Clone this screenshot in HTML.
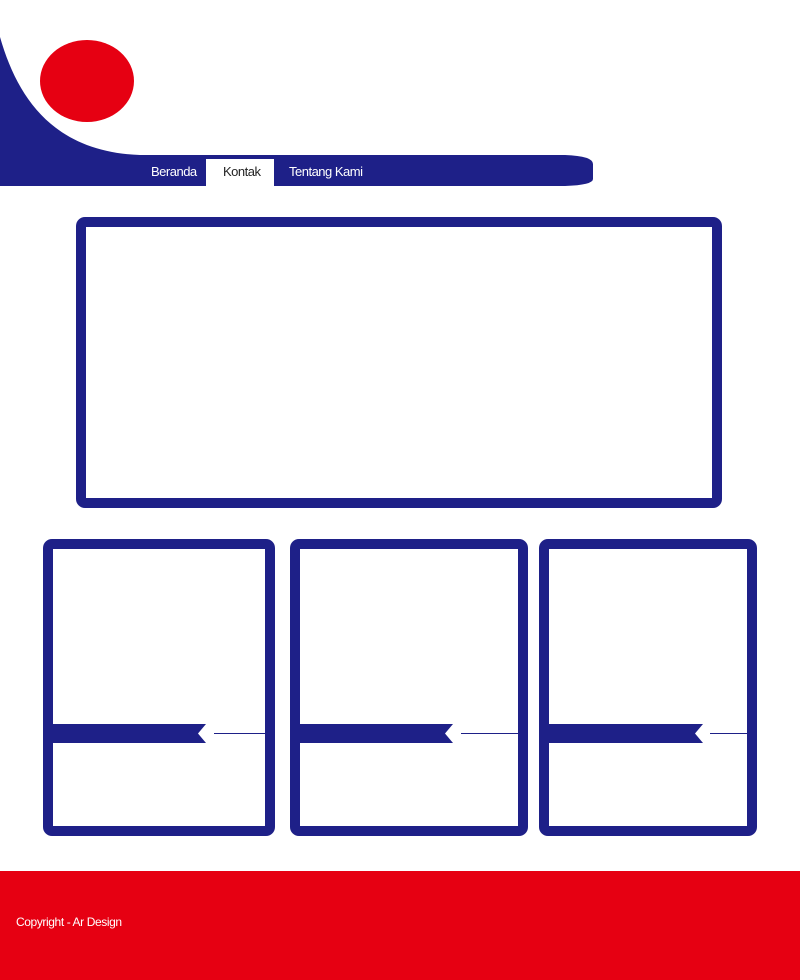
<!DOCTYPE html>
<html><head><style>
body{margin:0;width:800px;height:980px;position:relative;background:#fff;font-family:"Liberation Sans",sans-serif;overflow:hidden}
.a{position:absolute}
.box{position:absolute;border:10px solid #1e2088;border-radius:9px;box-sizing:border-box;background:#fff}
.nav{font-size:13px;color:#fff;top:164px;letter-spacing:-0.5px}
</style></head><body>
<svg class="a" style="left:0;top:0" width="800" height="200">
<path d="M0 37 C18 100 55 152 140 155 L565 155 Q593 156 593 164 L593 179 Q593 185 565 186 L0 186 Z" fill="#1e2088"/>
<ellipse cx="87" cy="81" rx="47" ry="41" fill="#e60012"/>
<rect x="206" y="159" width="68" height="28" fill="#fff"/>
</svg>
<div class="a nav" style="left:151px">Beranda</div>
<div class="a nav" style="left:223px;color:#222">Kontak</div>
<div class="a nav" style="left:289px">Tentang Kami</div>
<div class="box" style="left:76px;top:217px;width:646px;height:291px"></div>
<div class="box" style="left:43px;top:539px;width:232px;height:297px"></div>
<div class="box" style="left:290px;top:539px;width:238px;height:297px"></div>
<div class="box" style="left:539px;top:539px;width:218px;height:297px"></div>
<svg class="a" style="left:0;top:720px" width="800" height="30">
<path d="M53 4 H206 L198 13.5 L206 23 H53Z" fill="#1e2088"/>
<path d="M214 13.5 H265" stroke="#1e2088"/>
<path d="M300 4 H453 L445 13.5 L453 23 H300Z" fill="#1e2088"/>
<path d="M461 13.5 H518" stroke="#1e2088"/>
<path d="M549 4 H703 L695 13.5 L703 23 H549Z" fill="#1e2088"/>
<path d="M710 13.5 H747" stroke="#1e2088"/>
</svg>
<div class="a" style="left:0;top:871px;width:800px;height:109px;background:#e60012"></div>
<div class="a" style="left:16px;top:915px;color:#fff;font-size:12px;letter-spacing:-0.4px">Copyright - Ar Design</div>
</body></html>
